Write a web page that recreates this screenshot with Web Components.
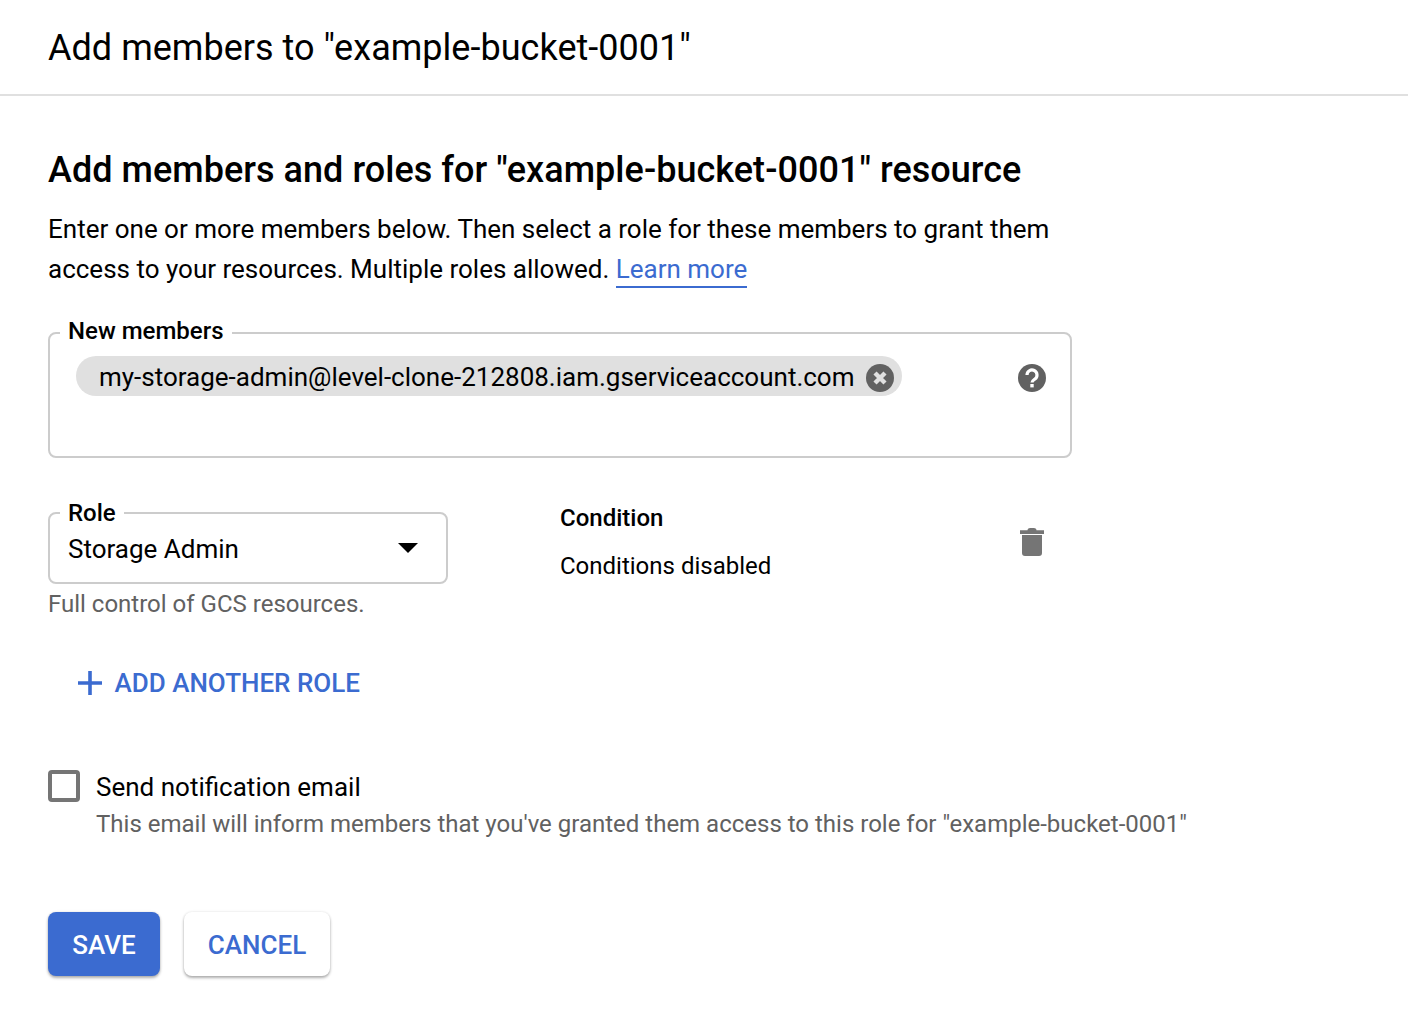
<!DOCTYPE html>
<html>
<head>
<meta charset="utf-8">
<title>Add members</title>
<style>
  html, body { margin: 0; background: #fff; }
  body { font-family: Roboto, "Liberation Sans", sans-serif; color: #000; }
</style>
</head>
<body>
<members-page></members-page>

<script>
class PageHeader extends HTMLElement {
  constructor() {
    super();
    this.attachShadow({ mode: 'open' });
    this.shadowRoot.innerHTML = `
      <style>
        :host { display: flex; align-items: center; height: 92px; padding: 2px 48px 0; border-bottom: 2px solid #e0e0e0; font-size: 36px; line-height: 92px; color: #000; letter-spacing: .03px; }
      </style>
      <slot></slot>`;
  }
}

class OutlinedField extends HTMLElement {
  constructor() {
    super();
    this.attachShadow({ mode: 'open' });
    this.shadowRoot.innerHTML = `
      <style>
        :host { display: block; position: relative; box-sizing: border-box; border: 2px solid #ccc; border-radius: 8px; }
        .label { position: absolute; left: 10px; top: var(--label-top, -17px); padding: 0 8px; background: #fff; font-size: 24px; line-height: 28px; font-weight: 500; }
      </style>
      <span class="label"><slot name="label"></slot></span>
      <slot></slot>`;
  }
}

class MemberChip extends HTMLElement {
  constructor() {
    super();
    this.attachShadow({ mode: 'open' });
    this.shadowRoot.innerHTML = `
      <style>
        :host { display: inline-flex; align-items: center; box-sizing: border-box; height: 40px; padding: 2px 8px 0 23px; border-radius: 20px; background: #e0e0e0; font-size: 26px; gap: 11px; }
        svg { display: block; width: 28px; height: 28px; margin-top: 2px; }
      </style>
      <slot></slot>
      <svg viewBox="0 0 28 28"><circle cx="14" cy="14" r="14" fill="#616161"/><path d="M9 9l10 10M19 9L9 19" stroke="#e0e0e0" stroke-width="4.4" fill="none"/></svg>`;
  }
}

class RoleRow extends HTMLElement {
  constructor() {
    super();
    this.attachShadow({ mode: 'open' });
    this.shadowRoot.innerHTML = `
      <style>
        :host { display: grid; grid-template-columns: 400px 348px 24px; column-gap: 112px; }
        outlined-field { --label-top: -15px; height: 72px; display: flex; align-items: center; justify-content: space-between; padding: 2px 28px 0 18px; font-size: 26px; }
        .arrow { width: 0; height: 0; border-left: 10px solid transparent; border-right: 10px solid transparent; border-top: 10px solid #000; margin-top: -2px; }
        .help { font-size: 24px; line-height: 28px; color: #616161; margin-top: 6px; }
        .cond { font-size: 24px; line-height: 28px; }
        .cond b { display: block; font-weight: 500; margin: -8px 0 20px; }
        .trash { display: block; width: 24px; height: 28px; margin-top: 16px; }
      </style>
      <div>
        <outlined-field><span slot="label">Role</span><span>Storage Admin</span><div class="arrow"></div></outlined-field>
        <div class="help">Full control of GCS resources.</div>
      </div>
      <div class="cond"><b>Condition</b>Conditions disabled</div>
      <svg class="trash" viewBox="0 0 24 28"><path fill="#757575" d="M7.5 2.3C7.5 .8 9 0 10 0h4c1 0 2.5 .8 2.5 2.3H24V6H0V2.3zM2 7h20v18a3 3 0 0 1-3 3H5a3 3 0 0 1-3-3z"/></svg>`;
  }
}

class ActionButton extends HTMLElement {
  constructor() {
    super();
    this.attachShadow({ mode: 'open' });
    this.shadowRoot.innerHTML = `
      <style>
        :host { display: inline-flex; align-items: center; justify-content: center; box-sizing: border-box; height: 64px; padding-top: 2px; border-radius: 8px; font-size: 26px; font-weight: 500; background: #fff; color: #3b6bd0; box-shadow: 0 2px 3px rgba(0,0,0,.3), 0 0 3px rgba(0,0,0,.1); }
        :host([primary]) { background: #3b6bd0; color: #fff; }
      </style>
      <slot></slot>`;
  }
}

class MembersPage extends HTMLElement {
  constructor() {
    super();
    this.attachShadow({ mode: 'open' });
    this.shadowRoot.innerHTML = `
      <style>
        :host { display: block; }
        main { padding: 0 48px 56px; }
        h2 { margin: 0; padding-top: 52px; font-size: 36px; line-height: 44px; font-weight: 500; letter-spacing: .04px; }
        .intro { margin: 17px 0 0; font-size: 26px; line-height: 40px; }
        .intro div { white-space: nowrap; }
        a { color: #3b6bd0; text-decoration: none; border-bottom: 2px solid #3b6bd0; padding-bottom: 2px; }
        .members { display: flex; justify-content: space-between; align-items: flex-start; width: 1024px; height: 126px; margin-top: 43px; padding: 22px 24px 0 26px; }
        .qmark { display: block; width: 28px; height: 28px; margin-top: 8px; }
        role-row { margin-top: 54px; }
        .add { display: flex; align-items: center; gap: 12.5px; margin: 49px 0 0 30px; font-size: 26px; font-weight: 500; line-height: 32px; color: #3b6bd0; }
        .add svg { display: block; width: 24px; height: 24px; }
        .notify { display: grid; grid-template-columns: 32px 1fr; column-gap: 16px; margin-top: 71px; }
        .box { box-sizing: border-box; width: 32px; height: 32px; border: 4px solid #757575; border-radius: 4px; }
        .notify span { font-size: 26px; line-height: 34px; }
        .notify small { grid-column: 2; font-size: 24px; line-height: 28px; color: #616161; margin-top: 6px; }
        .actions { display: flex; gap: 24px; margin-top: 74px; }
        .save { width: 112px; }
        .cancel { width: 146px; }
      </style>
      <page-header>Add members to "example-bucket-0001"</page-header>
      <main>
        <h2>Add members and roles for "example-bucket-0001" resource</h2>
        <div class="intro">
          <div>Enter one or more members below. Then select a role for these members to grant them</div>
          <div>access to your resources. Multiple roles allowed. <a>Learn more</a></div>
        </div>
        <outlined-field class="members">
          <span slot="label">New members</span>
          <member-chip>my-storage-admin@level-clone-212808.iam.gserviceaccount.com</member-chip>
          <svg class="qmark" viewBox="0 0 28 28"><circle cx="14" cy="14" r="14" fill="#616161"/><path d="M9 11a5 5 0 1 1 8 4c-1.500 1.100-3 1.800-3 3.500" stroke="#fff" stroke-width="3.2" fill="none"/><rect x="12.3" y="20" width="3.4" height="3.4" fill="#fff"/></svg>
        </outlined-field>
        <role-row></role-row>
        <div class="add"><svg viewBox="0 0 24 24"><path d="M12 0v24M0 12h24" stroke="#3b6bd0" stroke-width="3.6" fill="none"/></svg>ADD ANOTHER ROLE</div>
        <div class="notify">
          <div class="box"></div>
          <span>Send notification email</span>
          <small>This email will inform members that you've granted them access to this role for "example-bucket-0001"</small>
        </div>
        <div class="actions">
          <action-button class="save" primary>SAVE</action-button>
          <action-button class="cancel">CANCEL</action-button>
        </div>
      </main>`;
  }
}

customElements.define('page-header', PageHeader);
customElements.define('outlined-field', OutlinedField);
customElements.define('member-chip', MemberChip);
customElements.define('role-row', RoleRow);
customElements.define('action-button', ActionButton);
customElements.define('members-page', MembersPage);
</script>
</body>
</html>
